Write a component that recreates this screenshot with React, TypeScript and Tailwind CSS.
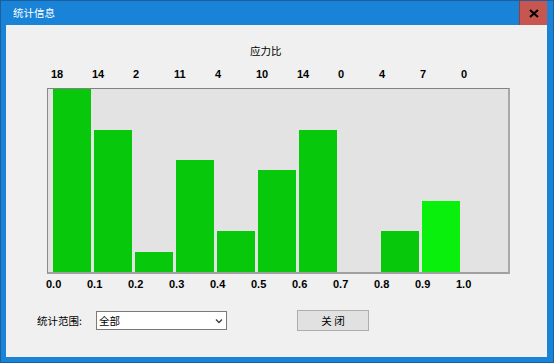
import React from "react";

const cjk = { fontFamily: '"Noto Sans CJK SC", "Noto Sans", sans-serif' };
const num = { fontFamily: '"Liberation Sans", Arial, sans-serif' };

const counts = [18, 14, 2, 11, 4, 10, 14, 0, 4, 7, 0];
const bars = [18, 14, 2, 11, 4, 10, 14, 0, 4, 7];
const ticks = ["0.0", "0.1", "0.2", "0.3", "0.4", "0.5", "0.6", "0.7", "0.8", "0.9", "1.0"];

export default function App() {
  return (
    <div className="w-[554px] h-[363px] bg-[#1883d7] border border-[#1b5f9c] flex flex-col overflow-hidden">
      {/* title bar */}
      <div className="h-[24px] flex items-center">
        <div className="pl-[12px] text-white text-[10.5px] leading-[14px] flex-1" style={cjk}>
          统计信息
        </div>
        <div className="w-[28px] h-[24px] bg-[#c75650] flex items-center justify-center border-l border-[#9a3c36]">
          <svg width="10" height="9" viewBox="0 0 10 9">
            <path d="M1 1 L9 8 M9 1 L1 8" stroke="#000" strokeWidth="2.2" strokeLinecap="butt" />
          </svg>
        </div>
        <div className="w-[6px]" />
      </div>
      {/* content */}
      <div className="ml-[5px] mr-[6px] h-[332px] bg-[#f0f0f0] flex flex-col">
        <div className="pl-[41px] flex flex-col">
          <div className="mt-[19px] h-[14px] pl-[203px] text-[10.5px] leading-[14px] text-black" style={cjk}>
            应力比
          </div>
          <div className="mt-[10px] h-[13px] flex pl-[4px]" style={num}>
            {counts.map((c, i) => (
              <div key={i} className="w-[41px] text-[11px] leading-[13px] font-bold text-black">
                {c}
              </div>
            ))}
          </div>
          <div className="mt-[7px] w-[463px] h-[186px] bg-[#e3e3e3] border-t border-l border-t-[#828282] border-l-[#8a8a8a] border-r-2 border-b-2 border-r-[#a8a8a8] border-b-[#a0a0a0]">
            <div className="h-full flex items-end pl-[5px] gap-[3px]">
              {bars.map((b, i) => (
                <div
                  key={i}
                  className={
                    "w-[38px] " + (i === 9 ? "bg-[#08f00c]" : "bg-[#08c80c]")
                  }
                  style={{ height: Math.round((b * 183) / 18) + "px" }}
                />
              ))}
            </div>
          </div>
          <div className="mt-[4px] h-[13px] flex ml-[-1px]" style={num}>
            {ticks.map((t) => (
              <div key={t} className="w-[41px] text-[11px] leading-[13px] font-bold text-black">
                {t}
              </div>
            ))}
          </div>
        </div>
        {/* bottom row */}
        <div className="mt-[19px] h-[21px] flex items-center pl-[31px]">
          <div className="w-[59px] text-[10.5px] leading-[14px] text-black" style={cjk}>
            统计范围:
          </div>
          <div className="w-[131px] h-[19px] bg-white border border-[#7a7a7a] flex items-center pl-[2px] pr-[3px]">
            <span className="flex-1 text-[10.5px] leading-[14px] text-black" style={cjk}>
              全部
            </span>
            <svg width="8" height="6" viewBox="0 0 8 6">
              <path d="M1 1.5 L4 4.5 L7 1.5" stroke="#404040" strokeWidth="1.4" fill="none" />
            </svg>
          </div>
          <div
            className="ml-[70px] w-[72px] h-[21px] bg-[#e1e1e1] border border-[#adadad] flex items-center justify-center text-[10.5px] leading-[14px] text-black"
            style={cjk}
          >
            关 闭
          </div>
        </div>
      </div>
    </div>
  );
}
